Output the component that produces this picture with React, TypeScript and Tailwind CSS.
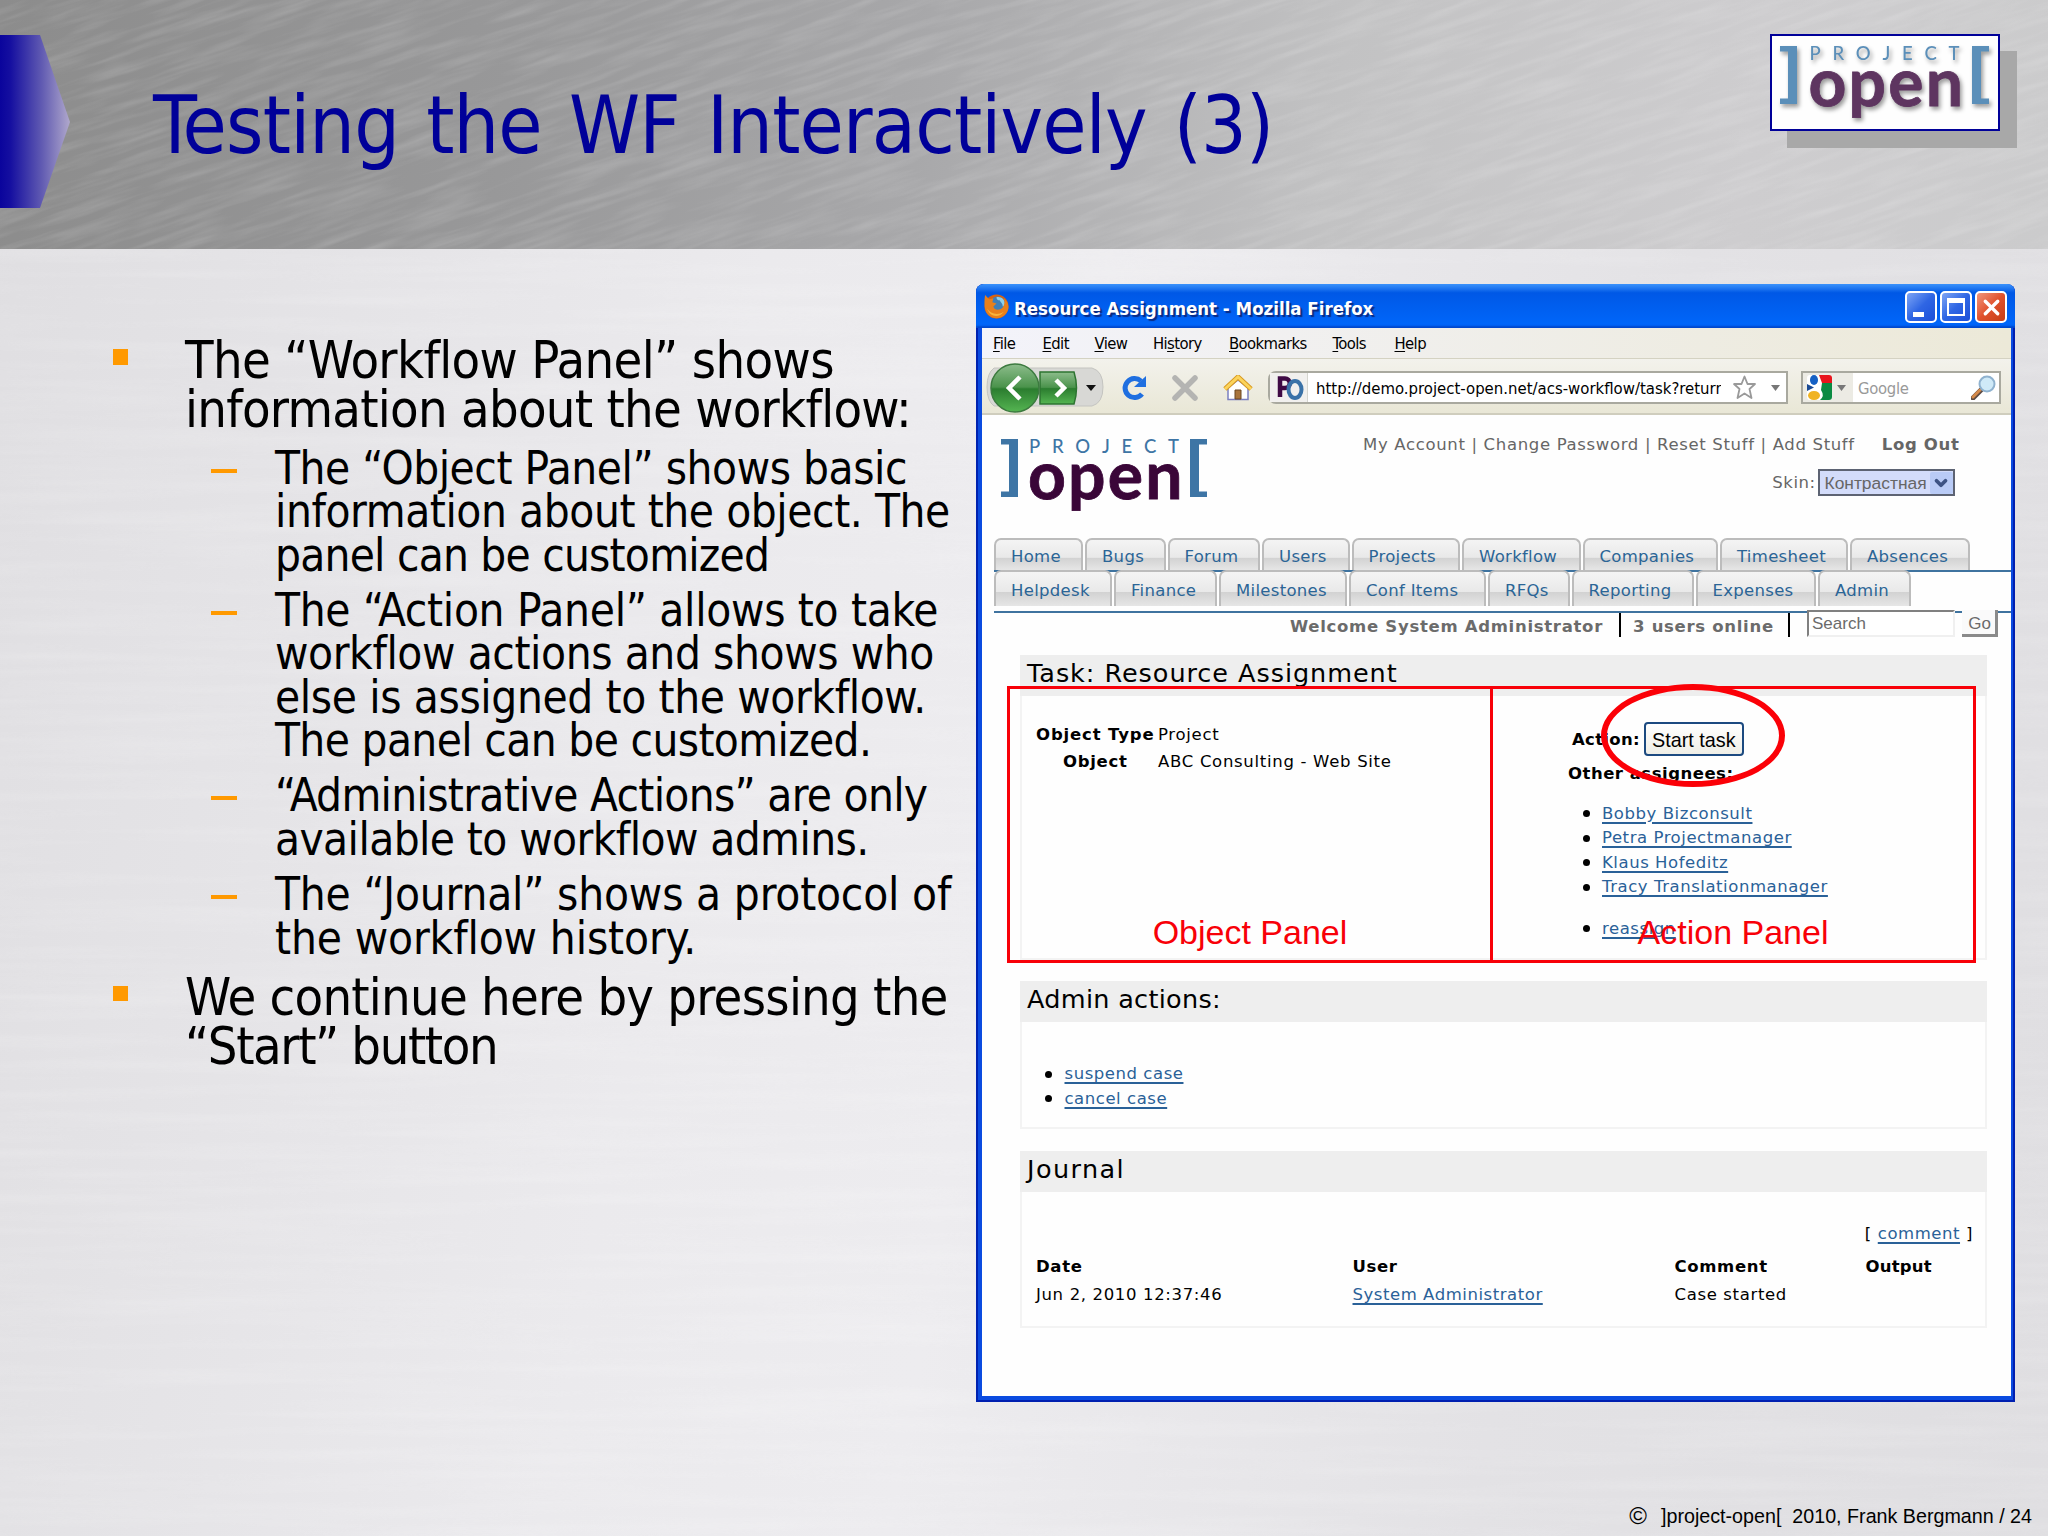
import React from 'react';
import { ChevronDown, X } from 'lucide-react';

const tabRows = [
  [
    { label: 'Home', width: 'w-[89px]' },
    { label: 'Bugs', width: 'w-[80.5px]' },
    { label: 'Forum', width: 'w-[92.5px]' },
    { label: 'Users', width: 'w-[87.5px]' },
    { label: 'Projects', width: 'w-[108.5px]' },
    { label: 'Workflow', width: 'w-[118.5px]' },
    { label: 'Companies', width: 'w-[135.5px]' },
    { label: 'Timesheet', width: 'w-[128px]' },
    { label: 'Absences', width: 'w-[120px]' },
  ],
  [
    { label: 'Helpdesk', width: 'w-[118px]' },
    { label: 'Finance', width: 'w-[103px]' },
    { label: 'Milestones', width: 'w-[128px]' },
    { label: 'Conf Items', width: 'w-[137px]' },
    { label: 'RFQs', width: 'w-[81.5px]' },
    { label: 'Reporting', width: 'w-[122px]' },
    { label: 'Expenses', width: 'w-[120.5px]' },
    { label: 'Admin', width: 'w-[93px]' },
  ],
];

const menus = [
  { before: '', key: 'F', after: 'ile', width: 'w-[49.5px]' },
  { before: '', key: 'E', after: 'dit', width: 'w-[52px]' },
  { before: '', key: 'V', after: 'iew', width: 'w-[58.5px]' },
  { before: 'Hi', key: 's', after: 'tory', width: 'w-[76px]' },
  { before: '', key: 'B', after: 'ookmarks', width: 'w-[103.5px]' },
  { before: '', key: 'T', after: 'ools', width: 'w-[62px]' },
  { before: '', key: 'H', after: 'elp', width: 'w-[60px]' },
];

const assignees = ['Bobby Bizconsult', 'Petra Projectmanager', 'Klaus Hofeditz', 'Tracy Translationmanager'];

interface Line {
  text: string;
  tracking: string;
}

const intro: Line[] = [
  { text: 'The “Workflow Panel” shows', tracking: 'tracking-[-0.65px]' },
  { text: 'information about the workflow:', tracking: 'tracking-[-0.73px]' },
];

const subPoints: Line[][] = [
  [
    { text: 'The “Object Panel” shows basic', tracking: 'tracking-[-0.46px]' },
    { text: 'information about the object. The', tracking: 'tracking-[-0.42px]' },
    { text: 'panel can be customized', tracking: 'tracking-[-0.78px]' },
  ],
  [
    { text: 'The “Action Panel” allows to take', tracking: 'tracking-[-0.3px]' },
    { text: 'workflow actions and shows who', tracking: 'tracking-[-0.41px]' },
    { text: 'else is assigned to the workflow.', tracking: 'tracking-[-0.38px]' },
    { text: 'The panel can be customized.', tracking: 'tracking-[-0.64px]' },
  ],
  [
    { text: '“Administrative Actions” are only', tracking: 'tracking-[-0.7px]' },
    { text: 'available to workflow admins.', tracking: 'tracking-[-0.59px]' },
  ],
  [
    { text: 'The “Journal” shows a protocol of', tracking: 'tracking-[-0.18px]' },
    { text: 'the workflow history.', tracking: 'tracking-[-0.13px]' },
  ],
];

const outro: Line[] = [
  { text: 'We continue here by pressing the', tracking: 'tracking-[-0.76px]' },
  { text: '“Start” button', tracking: 'tracking-[-1.4px]' },
];

interface LogoProps {
  bracket: string;
  word: string;
  width: string;
  shadow?: string;
}

const Logo: React.FC<LogoProps> = ({ bracket, word, width, shadow = '' }) => (
  <div className={`flex h-[78px] justify-between ${width} ${bracket} ${shadow}`}>
    <svg width="17" height="58" viewBox="0 0 17 58" fill="currentColor">
      <path d="M0 0H17V58H0V52.5H8V5.5H0Z" />
    </svg>
    <div className="w-[152px]">
      <div className="flex h-[18px] justify-between px-[1px] font-['Lato'] text-[18.5px] leading-[15px] font-medium">
        {'PROJECT'.split('').map((c, i) => (
          <span key={i}>{c}</span>
        ))}
      </div>
      <div className={`-mt-[1px] font-['Lato'] text-[66px] leading-[35px] font-bold tracking-[2.2px] [-webkit-text-stroke:0.8px_currentColor] ${word}`}>open</div>
    </div>
    <svg width="17" height="58" viewBox="0 0 17 58" fill="currentColor">
      <path d="M17 0H0V58H17V52.5H9V5.5H17Z" />
    </svg>
  </div>
);

const Brushed: React.FC<{ id: string; frequency: string; matrix: string; className: string }> = ({ id, frequency, matrix, className }) => (
  <svg className={`pointer-events-none absolute ${className}`}>
    <filter id={id} x="0" y="0" width="100%" height="100%">
      <feTurbulence type="fractalNoise" baseFrequency={frequency} numOctaves={3} seed={4} />
      <feColorMatrix values={matrix} />
    </filter>
    <rect width="100%" height="100%" filter={`url(#${id})`} />
  </svg>
);

const Lines: React.FC<{ lines: Line[] }> = ({ lines }) => (
  <div className="whitespace-nowrap">
    {lines.map((line) => (
      <p key={line.text} className={line.tracking}>
        {line.text}
      </p>
    ))}
  </div>
);

const Point: React.FC<{ lines: Line[] }> = ({ lines }) => (
  <div className="flex text-[52px] leading-[49px]">
    <div className="mt-[13px] mr-[57px] size-[15.5px] shrink-0 bg-[#ff9900]" />
    <Lines lines={lines} />
  </div>
);

const SubPoint: React.FC<{ lines: Line[] }> = ({ lines }) => (
  <div className="flex pl-[98px] text-[45.5px] leading-[43.6px]">
    <div className="mt-[22px] mr-[38.5px] h-[4px] w-[26px] shrink-0 bg-[#ff9900]" />
    <Lines lines={lines} />
  </div>
);

const Link: React.FC<{ children: React.ReactNode }> = ({ children }) => (
  <a className="tracking-[0.55px] text-[#2a6198] underline decoration-[1.5px] underline-offset-[3px]">{children}</a>
);

const Bullet: React.FC<{ children: React.ReactNode }> = ({ children }) => (
  <li className="flex h-[24.5px] items-center leading-[24px]">
    <span className="mr-[12.5px] size-[7px] rounded-full bg-black" />
    <Link>{children}</Link>
  </li>
);

const Panel: React.FC<{ title: string; height: string; tracking: string; children: React.ReactNode }> = ({ title, height, tracking, children }) => (
  <section className={`ml-[38px] flex w-[967px] flex-col ${height}`}>
    <h2 className={`h-[41px] shrink-0 bg-[#eeeeee] pl-[7px] text-[25.5px] leading-[37px] ${tracking}`}>{title}</h2>
    <div className="flex-1 border-2 border-t-0 border-[#f3f3f3]">{children}</div>
  </section>
);

const TitleBar = () => (
  <div className="flex h-[44px] items-center bg-gradient-to-b from-[#3a92fb] via-[#0058e6] via-20% to-[#0068fc] pr-[8px] pl-[8px] shadow-[inset_0_-3px_2px_-1px_#0047cc]">
    <svg width="25" height="25" viewBox="0 0 24 24">
      <circle cx="12" cy="12" r="11.5" fill="#d9620f" />
      <circle cx="13" cy="10" r="7.5" fill="#3f7fb8" />
      <path d="M12 3c4-1 8 2 8 6 0 2-1 3-2 3 0-3-2-4-3-6-2 0-3-1-3-3Z" fill="#8fd0ea" />
      <path d="M1 1 5 5 9 4 8 8 12 9 9 12c1 4 6 4 9 1 2-3 2-6 1-9 5 4 6 10 2 15-4 5-12 6-17 1C0 16 0 8 1 1Z" fill="#e8801c" />
      <path d="M3 14c3 5 10 7 16 3-4 6-13 6-16-3Z" fill="#f8b43c" />
    </svg>
    <span className="mt-[5px] ml-[5px] flex-1 text-[18.5px] leading-[38px] font-bold text-white [text-shadow:2px_2px_1px_#0a2a80]">Resource Assignment - Mozilla Firefox</span>
    <div className="mt-[2px] flex gap-[3px]">
      <div className="flex size-[32px] rounded-[5px] border-2 border-white bg-gradient-to-br from-[#7ea4f4] via-[#2f66e4] to-[#1c4fd8]">
        <div className="mt-[19px] ml-[6px] h-[5px] w-[11px] bg-white" />
      </div>
      <div className="flex size-[32px] items-center justify-center rounded-[5px] border-2 border-white bg-gradient-to-br from-[#7ea4f4] via-[#2f66e4] to-[#1c4fd8]">
        <div className="size-[18px] border-2 border-t-[5px] border-white" />
      </div>
      <div className="flex size-[32px] items-center justify-center rounded-[5px] border-2 border-white bg-gradient-to-br from-[#f0957a] via-[#e0512c] to-[#c63d14]">
        <X className="size-[25px] shrink-0 text-white" strokeWidth={3.2} />
      </div>
    </div>
  </div>
);

const ToolBar = () => (
  <div className="flex h-[56px] items-center border-b-2 border-[#cfcdbd] bg-gradient-to-b from-[#f3f2ec] to-[#e9e7d6] pt-[3px] pl-[4px]">
    {/* back / forward */}
    <svg width="118" height="50" viewBox="0 0 118 50">
      <defs>
        <linearGradient id="green" x1="0" y1="0" x2="0" y2="1">
          <stop offset="0" stopColor="#8dbd8c" />
          <stop offset="0.48" stopColor="#4b934c" />
          <stop offset="0.52" stopColor="#2b7d2f" />
          <stop offset="1" stopColor="#55b552" />
        </linearGradient>
      </defs>
      <path d="M8 5H106Q117 8 117 24T106 43H8Q1 38 1 24T8 5Z" fill="#d8d8d5" stroke="#c4c4c0" />
      <path d="M54 9H88Q93 25 88 41H54Z" fill="url(#green)" stroke="#2d7431" strokeWidth="1.5" />
      <circle cx="29" cy="25" r="24" fill="url(#green)" stroke="#3c7a3f" strokeWidth="1.5" />
      <path d="M34 14 23 25 34 36" fill="none" stroke="#fff" strokeWidth="4.5" />
      <path d="M70 17 78 25 70 33" fill="none" stroke="#fff" strokeWidth="4.5" />
      <path d="M100 22H110L105 28Z" fill="#111" />
    </svg>
    <svg className="ml-[17px]" width="26" height="26" viewBox="0 0 26 26" fill="none">
      <path d="M20 6A9.5 9.5 0 1 0 21 19" stroke="#1f6fe0" strokeWidth="5" />
      <path d="M25 1V12H13Z" fill="#1f6fe0" />
    </svg>
    <svg className="ml-[24px]" width="28" height="26" viewBox="0 0 28 26">
      <path d="M4 3 24 23M24 3 4 23" stroke="#b4b4b2" strokeWidth="5.5" strokeLinecap="round" />
    </svg>
    <svg className="ml-[24px]" width="30" height="26" viewBox="0 0 30 26">
      <path d="M5 13V24.5H25V13L15 5Z" fill="#fff" stroke="#7a7fc0" strokeWidth="1.5" />
      <path d="M12 15H18V24H12Z" fill="#a8743c" stroke="#6b4620" />
      <path d="M2 14 15 2 28 14" fill="none" stroke="#d99a22" strokeWidth="5" />
      <path d="M2 14 15 2 28 14" fill="none" stroke="#fbd45c" strokeWidth="3" />
    </svg>
    {/* address */}
    <div className="ml-[15px] flex h-[33px] w-[520px] items-center rounded-l-[8px] border-2 border-[#a9a99f] bg-white">
      <div className="flex h-full w-[38px] items-center border-r border-[#d5d5cf] bg-[#f1f0ee] pl-[7px]">
        <svg width="27" height="26" viewBox="0 0 27 26" fill="none">
          <path d="M3 22V3.5H8A4.5 4.5 0 0 1 8 13H3" stroke="#3f0a45" strokeWidth="4.5" />
          <ellipse cx="18" cy="14.5" rx="6.5" ry="8.5" stroke="#3a72a8" strokeWidth="4" />
        </svg>
      </div>
      <div className="mt-[3px] ml-[8px] w-[405px] overflow-hidden text-[16.6px] leading-[30px] whitespace-nowrap">http://demo.project-open.net/acs-workflow/task?return</div>
      <svg className="ml-[11px]" width="25" height="25" viewBox="0 0 25 25">
        <path d="M12.5 1.5 15.5 9H23L17.5 14 19.5 23 12.5 18.5 5.5 23 7.5 14 2 9H9.5Z" fill="#fff" stroke="#9a9a9a" strokeWidth="1.8" strokeLinejoin="round" />
      </svg>
      <svg className="ml-[14px]" width="9" height="6" viewBox="0 0 9 6">
        <path d="M0 0H9L4.5 6Z" fill="#777" />
      </svg>
    </div>
    {/* search engine */}
    <div className="ml-[13px] flex h-[33px] w-[200px] items-center border-2 border-[#a9a99f] bg-white">
      <div className="flex h-full w-[50px] items-center bg-[#ecebe4] pl-[4px]">
        <svg width="25" height="25" viewBox="0 0 25 25">
          <rect width="25" height="25" rx="3" fill="#fff" />
          <path d="M12 0H22Q25 0 25 3V8H15Z" fill="#e8141c" />
          <path d="M15 8H25V22Q25 25 22 25H13Q18 21 14 15Z" fill="#0a8a42" />
          <ellipse cx="7" cy="5" rx="4" ry="5" fill="#1560c4" />
          <path d="M0 9 7 12.5 0 16Z" fill="#1a4a94" />
          <ellipse cx="7" cy="20.5" rx="6" ry="4.5" fill="#f0b323" />
        </svg>
        <svg className="ml-[5px]" width="9" height="6" viewBox="0 0 9 6">
          <path d="M0 0H9L4.5 6Z" fill="#777" />
        </svg>
      </div>
      <span className="mt-[3px] ml-[5px] flex-1 text-[16.5px] leading-[30px] tracking-[-0.3px] text-[#999]">Google</span>
      <svg className="mr-[3px]" width="25" height="25" viewBox="0 0 25 25">
        <path d="M2 23 10 15" stroke="#5b4a44" strokeWidth="5" strokeLinecap="round" />
        <path d="M2 22 9 15" stroke="#d58a4a" strokeWidth="3" strokeLinecap="round" />
        <circle cx="16" cy="9" r="7.5" fill="#cfeaf8" stroke="#8fb2cf" strokeWidth="2" />
      </svg>
    </div>
  </div>
);

const PageHeader = () => (
  <div className="flex h-[123px] justify-between pt-[20px] pr-[51.5px] pl-[19px]">
    <div className="pt-[4px]">
      <Logo bracket="text-[#3e75a5]" word="text-[#3a0638]" width="w-[206px]" />
    </div>
    <div className="flex flex-col items-end text-[16.5px] leading-[20px] text-[#666]">
      <div className="flex whitespace-pre tracking-[0.66px]">
        <span>My Account | Change Password | Reset Stuff | Add Stuff</span>
        <span className="ml-[27px] font-bold">Log Out</span>
      </div>
      <div className="mt-[14px] mr-[5px] flex h-[27px] items-center">
        <span className="mr-[2px] tracking-[0.5px]">Skin:</span>
        <div className="flex h-[27px] w-[137px] items-center justify-between border-2 border-[#5d6373] bg-[#d3dcfa] pl-[5px] font-['Liberation_Sans'] text-[17.4px]">
          Контрастная
          <span className="flex h-[22px] w-[23px] items-center justify-center rounded-[2px] bg-[#b9cbf6]">
            <ChevronDown className="size-[18px] text-[#3d5384]" strokeWidth={5} />
          </span>
        </div>
      </div>
    </div>
  </div>
);

const Tabs = () => (
  <nav className="ml-[12px] text-[16.5px] tracking-[0.3px] text-[#2b6596]">
    {tabRows.map((row, i) => (
      <div key={i} className={i === 0 ? 'flex h-[34px] gap-[2px] border-b-2 border-[#3f739f]' : 'relative -mt-[2px] flex h-[36px] gap-[2px]'}>
        {row.map((tab) => (
          <div
            key={tab.label}
            className={`h-full shrink-0 rounded-t-[7px] border-2 border-b-0 border-[#bcbcbc] bg-[linear-gradient(#f4f4f4,#e9e9e9_58%,#d2d2d2_60%,#e6e6e6)] pl-[15px] ${i === 0 ? 'leading-[33px]' : 'leading-[37px]'} ${tab.width}`}
          >
            {tab.label}
          </div>
        ))}
      </div>
    ))}
    <div className="mt-[5px] h-[2px] bg-[#3f739f]" />
  </nav>
);

const StatusRow = () => (
  <div className="relative -mt-[3px] mb-[17.5px] flex h-[27px] justify-end pr-[13px] text-[16.5px] text-[#6b6b6b]">
    <span className="mt-[3px] leading-[27px] font-bold tracking-[0.7px]">Welcome System Administrator</span>
    <span className="mt-[3px] ml-[16px] w-[2px] bg-black" />
    <span className="mt-[3px] ml-[12px] w-[143px] leading-[27px] font-bold tracking-[0.7px] whitespace-nowrap">3 users online</span>
    <span className="mt-[3px] ml-[12px] w-[2px] bg-black" />
    <div className="ml-[17px] h-[27px] w-[148px] border-2 border-[#f0f0f0] border-t-[#808080] border-l-[#808080] bg-white pl-[3px] font-['Liberation_Sans'] text-[17px] leading-[23px]">Search</div>
    <div className="ml-[7px] h-[27px] w-[36px] border-r-[3px] border-b-[3px] border-[#8a8a8a] bg-[#fafafa] pl-[2px] text-center font-['Liberation_Sans'] text-[17px] leading-[28px]">Go</div>
  </div>
);

const Journal = () => (
  <div className="pt-[32px] pl-[14px] tracking-[0.65px]">
    <div className="h-[29px] pr-[12px] text-right leading-[20px]">
      [ <Link>comment</Link> ]
    </div>
    <div className="grid grid-cols-[316.5px_322px_191px_1fr] leading-[28px]">
      <b>Date</b>
      <b>User</b>
      <b>Comment</b>
      <b className="tracking-[0.2px]">Output</b>
      <span>Jun 2, 2010 12:37:46</span>
      <span>
        <Link>System Administrator</Link>
      </span>
      <span>Case started</span>
    </div>
  </div>
);

const BrowserWindow = () => (
  <div className="relative mt-[35px] h-[1118px] w-[1039px] shrink-0 overflow-hidden rounded-t-[8px] bg-[#0a4be0] pr-[4px] pb-[6px] pl-[6px] font-['DejaVu_Sans_Condensed'] shadow-[inset_2px_0_0_#0022b0,inset_-2px_-2px_0_#001fb0]">
    <div className="-mr-[4px] -ml-[6px]">
      <TitleBar />
    </div>
    <div className="flex h-[31px] border-b border-[#d4d2c2] bg-gradient-to-r from-[#f3f3fa] to-[#ece9d8] pl-[11px] text-[16.5px] leading-[31px] tracking-[-0.6px]">
      {menus.map((m) => (
        <span key={m.after} className={m.width}>
          {m.before}
          <span className="underline underline-offset-[2px]">{m.key}</span>
          {m.after}
        </span>
      ))}
    </div>
    <ToolBar />
    <div className="h-[981px] bg-[#fefefe] font-['DejaVu_Sans']">
      <PageHeader />
      <Tabs />
      <StatusRow />
      <Panel title="Task: Resource Assignment" height="h-[305px]" tracking="tracking-[0.95px]">
        <div className="flex text-[16.5px] tracking-[0.7px]">
          <div className="grid h-[55px] w-[532px] grid-cols-[122px_1fr] pt-[25px] pl-[14px] leading-[27.5px]">
            <b className="tracking-[0.85px] whitespace-nowrap">Object Type</b>
            <span>Project</span>
            <b className="pl-[27px]">Object</b>
            <span>ABC Consulting - Web Site</span>
          </div>
          <div className="pt-[26px]">
            <div className="ml-[18px] flex h-[34px] items-center">
              <b className="mt-[4px] tracking-[0.3px]">Action:</b>
              <button className="ml-[4px] h-[34px] w-[100px] rounded-[4px] border-2 border-[#1c4a80] bg-gradient-to-b from-white to-[#efeee6] pt-[2px] font-['Liberation_Sans'] text-[19.8px] tracking-normal whitespace-nowrap">Start task</button>
            </div>
            <div className="ml-[14px] h-[46px] pt-[3px] leading-[30px] font-bold tracking-[0.5px]">Other assignees:</div>
            <ul className="ml-[28.5px]">
              {assignees.map((name) => (
                <Bullet key={name}>{name}</Bullet>
              ))}
            </ul>
            <ul className="mt-[17px] ml-[28.5px]">
              <Bullet>reassign</Bullet>
            </ul>
          </div>
        </div>
      </Panel>
      <div className="h-[21.5px]" />
      <Panel title="Admin actions:" height="h-[148px]" tracking="tracking-[0.3px]">
        <ul className="pt-[40px] pl-[23px] text-[16.5px]">
          <Bullet>suspend case</Bullet>
          <Bullet>cancel case</Bullet>
        </ul>
      </Panel>
      <div className="h-[22px]" />
      <Panel title="Journal" height="h-[177px]" tracking="tracking-[1.4px]">
        <div className="text-[16.5px]">
          <Journal />
        </div>
      </Panel>
    </div>

    {/* annotations over the browser */}
    <div className="absolute top-[402px] left-[31px] flex h-[277px] w-[969px] border-[3px] border-[#f80008] font-['Liberation_Sans'] text-[34px] leading-[40px] text-[#f80008]">
      <div className="flex w-[483px] items-end justify-center border-r-[3px] border-[#f80008] pb-[8.5px]">Object Panel</div>
      <div className="flex flex-1 items-end justify-center pb-[8.5px]">Action Panel</div>
    </div>
    <div className="absolute top-[400px] left-[625px] h-[103px] w-[184px] rounded-[50%] border-[6px] border-[#fb0007]" />
  </div>
);

export default function App() {
  return (
    <div className="relative flex h-[1536px] w-[2048px] flex-col overflow-hidden bg-[linear-gradient(100deg,#dfdee1,#ebeaed_35%,#edecef_50%,#e3e2e5_75%,#dfdee1)] font-['DejaVu_Sans_Condensed'] text-black">
      <Brushed id="fine" frequency="0.003 0.07" matrix="0 0 0 0 1  0 0 0 0 1  0 0 0 0 1  1.5 0 0 0 -0.6" className="top-[249px] left-0 h-[1287px] w-[2048px] opacity-20" />
      <header className="relative flex h-[249px] shrink-0 overflow-hidden bg-[linear-gradient(97deg,#8c8c8c,#989899_25%,#a8a8aa_45%,#c2c2c3_65%,#cecdcf_85%,#cbcbcc)]">
        <Brushed id="coarse" frequency="0.012 0.13" matrix="0 0 0 0 1  0 0 0 0 1  0 0 0 0 1  2 0 0 0 -0.8" className="-top-[450px] -left-[100px] h-[1150px] w-[2300px] -rotate-[18deg] opacity-15" />
        <svg className="relative mt-[35px]" width="70" height="173" viewBox="0 0 70 173">
          <defs>
            <linearGradient id="arrow">
              <stop offset="0" stopColor="#0a049c" />
              <stop offset="0.15" stopColor="#150fa0" />
              <stop offset="0.6" stopColor="#615bb2" />
              <stop offset="1" stopColor="#b0a8cc" />
            </linearGradient>
          </defs>
          <path d="M0 0H40L70 87 40 173H0Z" fill="url(#arrow)" />
        </svg>
        <h1 className="relative ml-[83px] flex-1 pt-[76px] text-[80px] leading-[100px] tracking-[-0.8px] text-[#000099] [word-spacing:5px]">Testing the WF Interactively (3)</h1>
        <div className="relative mt-[34px] mr-[48px] h-[97px] w-[230px] border-2 border-[#000099] bg-[#fefefe] pt-[10px] pl-[8px] shadow-[17px_17px_0_#a8a8a8]">
          <Logo bracket="text-[#5b8fb9]" word="text-[#5e3560]" width="w-[209px]" shadow="drop-shadow-[2px_3px_2px_#999]" />
        </div>
      </header>
      <main className="relative flex flex-1">
        <div className="w-[864px] shrink-0 pt-[87px] pl-[112.5px]">
          <Point lines={intro} />
          <div className="mt-[12.5px] mb-[12.5px] flex flex-col gap-[11.4px]">
            {subPoints.map((lines) => (
              <SubPoint key={lines[0].text} lines={lines} />
            ))}
          </div>
          <Point lines={outro} />
        </div>
        <div className="ml-[112px]">
          <BrowserWindow />
        </div>
      </main>
      <footer className="relative flex h-[40px] shrink-0 items-center justify-end pr-[16px] font-['Liberation_Sans'] text-[19.7px] leading-[40px] whitespace-pre">
        <span className="mr-[14px] text-[24px]">©</span>
        <span>]project-open[  2010, Frank Bergmann / 24</span>
      </footer>
    </div>
  );
}
